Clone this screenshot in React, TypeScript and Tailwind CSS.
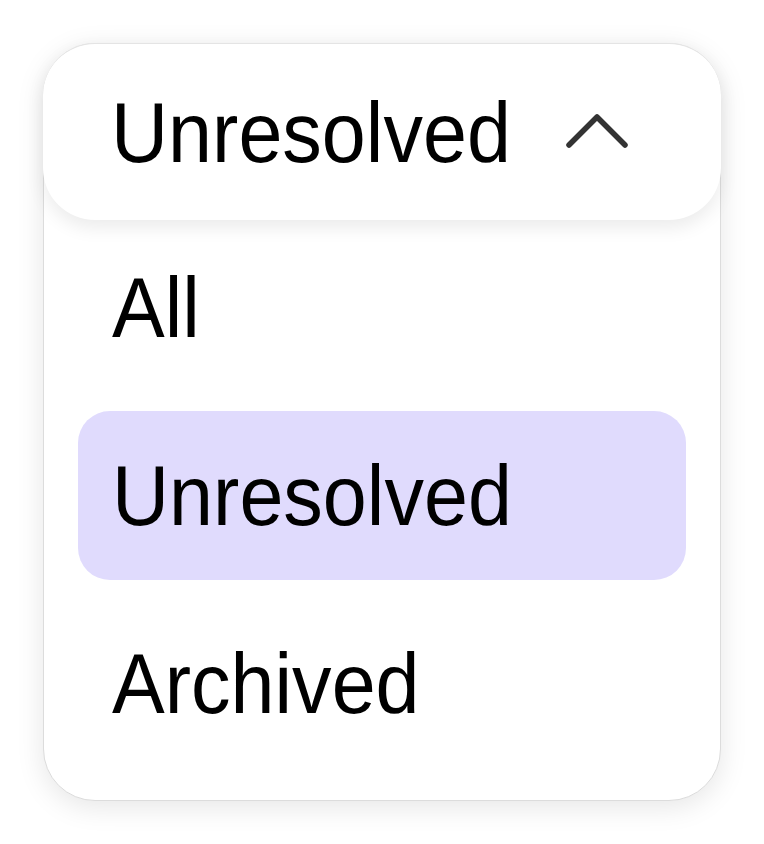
import React, { useState } from 'react';

const options = ['All', 'Unresolved', 'Archived'];

const ChevronUp: React.FC = () => (
  <svg width="64" height="38" viewBox="0 0 64 38" fill="none" className="shrink-0">
    <polyline points="4,34 32,6 60,34" stroke="#333333" strokeWidth="5.5" strokeLinecap="round" strokeLinejoin="round" />
  </svg>
);

export default function App() {
  const [selected, setSelected] = useState('Unresolved');

  return (
    <div className="w-[764px] h-[844px] bg-white pt-[43px] pl-[43px] font-['Liberation_Sans',Arial,sans-serif] text-black">
      <div className="w-[678px] h-[758px] rounded-[52px] bg-white border border-[#dcdcdc] shadow-[0_6px_28px_rgba(0,0,0,0.10)] flex flex-col">
        {/* trigger */}
        <div className="h-[177px] -m-px rounded-[52px] bg-white border-t border-[#e4e4e4] shadow-[0_8px_18px_rgba(0,0,0,0.08)] flex items-center pl-[68px] relative z-10">
          <span className="text-[85px] leading-none scale-x-[0.93] origin-left">{selected}</span>
          <span className="ml-[24px] -mt-[4px]">
            <ChevronUp />
          </span>
        </div>

        {/* options */}
        <div className="flex flex-col gap-[19px] px-[34px] pt-[4px]">
          {options.map((o) => (
            <button
              key={o}
              onClick={() => setSelected(o)}
              className={`h-[169px] rounded-[32px] flex items-center pl-[34px] text-left ${o === selected ? 'bg-[#e0dbfd]' : 'bg-transparent'}`}
            >
              <span className="text-[85px] leading-none scale-x-[0.93] origin-left">{o}</span>
            </button>
          ))}
        </div>
      </div>
    </div>
  );
}
